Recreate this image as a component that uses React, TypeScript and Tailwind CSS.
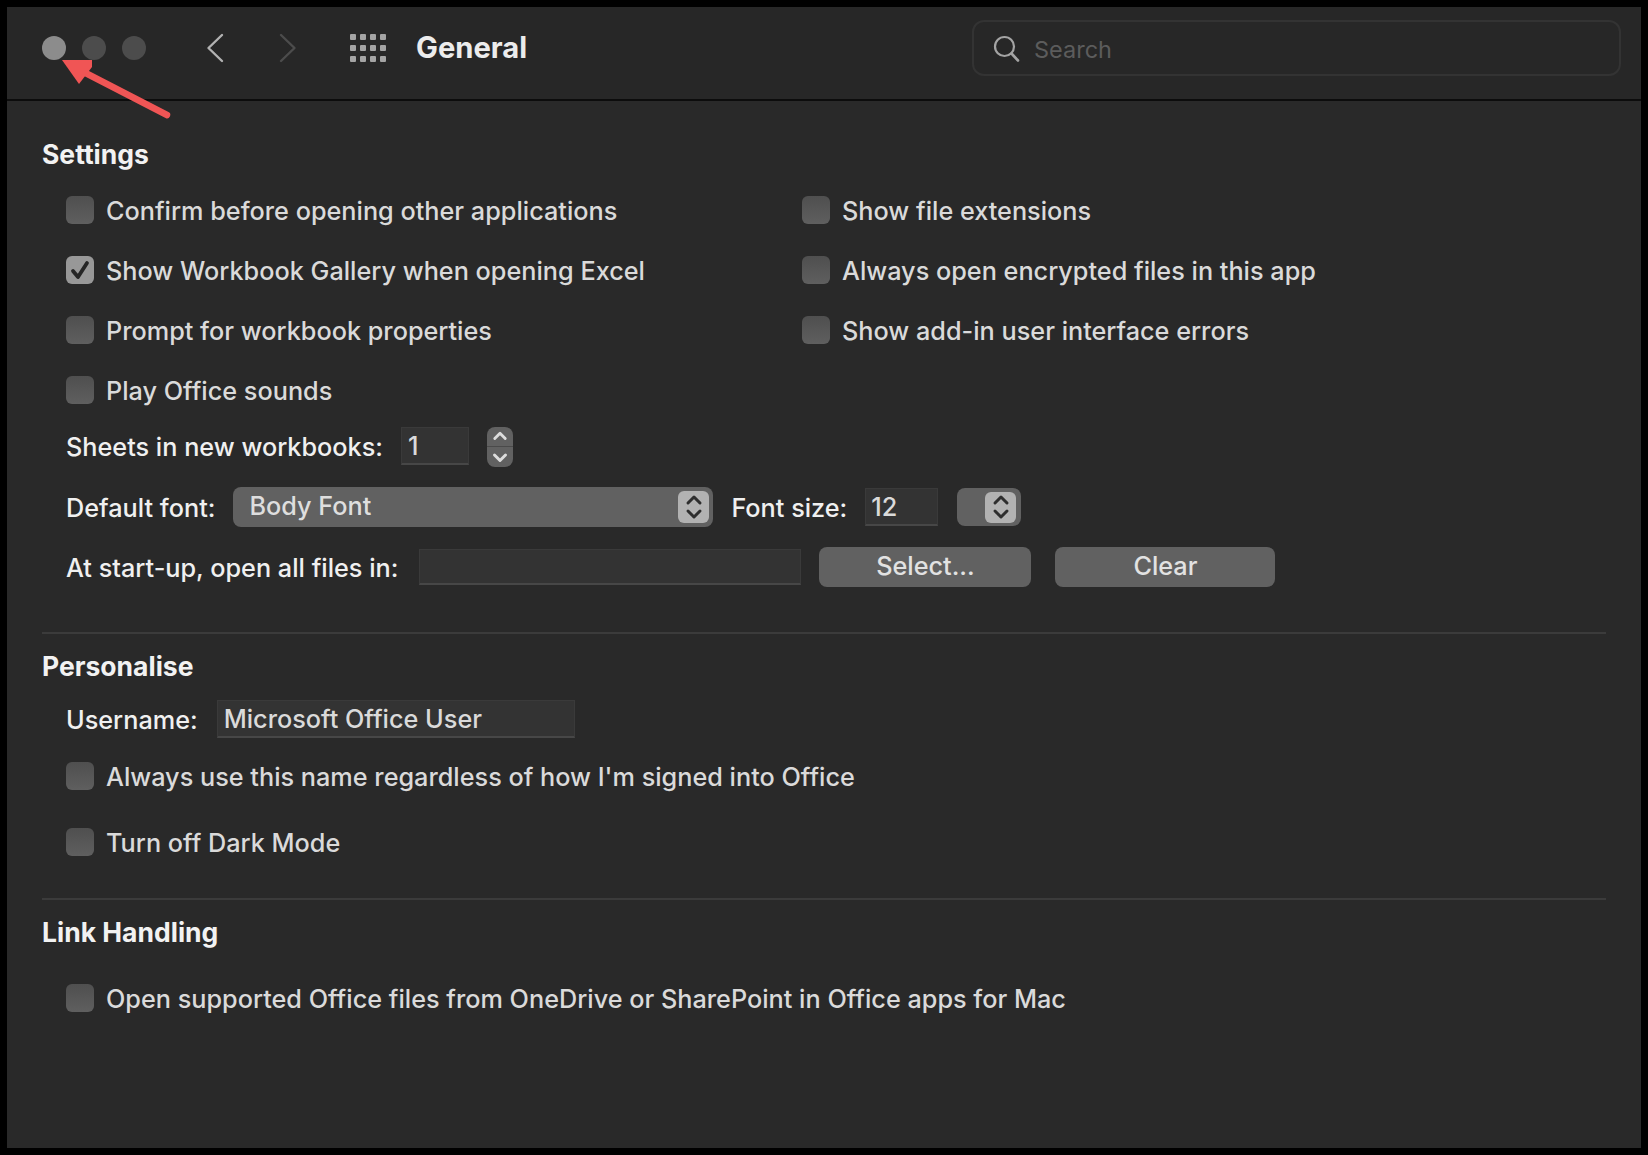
const F = "font-['Inter','Liberation_Sans',sans-serif]";

function Checkbox({ checked = false }: { checked?: boolean }) {
  if (checked) {
    return (
      <span className="flex h-[28px] w-[28px] shrink-0 items-center justify-center rounded-[6px] bg-[#989898]">
        <svg width="24" height="24" viewBox="0 0 24 24" fill="none">
          <path d="M5 13 L10 19 L19 5" stroke="#262626" strokeWidth="3.8" strokeLinecap="round" strokeLinejoin="round" />
        </svg>
      </span>
    );
  }
  return <span className="h-[28px] w-[28px] shrink-0 rounded-[6px] bg-gradient-to-b from-[#4f4f4f] to-[#5f5f5f]" />;
}

function CheckRow({ label, checked, h = "h-[60px]" }: { label: string; checked?: boolean; h?: string }) {
  return (
    <div className={`flex items-center gap-[12px] ${h}`}>
      <Checkbox checked={checked} />
      <span className="pt-[4px] text-[25.25px] font-[450] leading-none text-[#dadada] whitespace-nowrap">{label}</span>
    </div>
  );
}

function Heading({ children, className = "" }: { children: string; className?: string }) {
  return <div className={`flex h-[36px] items-center text-[26.5px] font-bold leading-none text-[#f2f2f2] ${className}`}>{children}</div>;
}

function Label({ children, className = "" }: { children: string; className?: string }) {
  return <span className={`pt-[4px] text-[25.25px] font-[450] leading-none text-[#f0f0f0] whitespace-nowrap ${className}`}>{children}</span>;
}

function Updown({ size = 20 }: { size?: number }) {
  return (
    <svg width={size} height={size * 1.4} viewBox="0 0 20 28" fill="none">
      <path d="M4 10 L10 4 L16 10" stroke="#2e2e2e" strokeWidth="3" strokeLinecap="round" strokeLinejoin="round" />
      <path d="M4 18 L10 24 L16 18" stroke="#2e2e2e" strokeWidth="3" strokeLinecap="round" strokeLinejoin="round" />
    </svg>
  );
}

function Field({ className = "", children }: { className?: string; children?: string }) {
  return (
    <div className={`flex items-center border border-[#3a3a3a] border-b-2 border-b-[#474747] bg-[#333333] pt-[2px] text-[25.25px] font-[450] leading-none text-[#dadada] ${className}`}>
      {children}
    </div>
  );
}

function Button({ children, className = "" }: { children: string; className?: string }) {
  return (
    <div className={`flex h-[40px] items-center justify-center rounded-[8px] bg-[#616161] text-[25.25px] font-[450] leading-none text-[#e2e2e2] ${className}`}>
      {children}
    </div>
  );
}

export default function App() {
  return (
    <div className={`relative h-[1155px] w-[1648px] overflow-hidden bg-black pl-[7px] pt-[7px] ${F}`}>
      <div className="flex h-[1141px] w-[1634px] flex-col bg-[#292929]">
        <header className="flex h-[94px] shrink-0 items-center border-b-2 border-b-[#0c0c0c] bg-[#272727] pb-[10px] pl-[35px] pr-[20px]">
          <span className="h-[24px] w-[24px] rounded-full bg-[#8c8c8c]" />
          <span className="ml-[16px] h-[24px] w-[24px] rounded-full bg-[#4c4c4c]" />
          <span className="ml-[16px] h-[24px] w-[24px] rounded-full bg-[#4c4c4c]" />
          <svg className="ml-[60px]" width="18" height="30" viewBox="0 0 18 30" fill="none">
            <path d="M16 2 L2.5 15 L16 28" stroke="#b2b2b2" strokeWidth="2.4" strokeLinecap="round" strokeLinejoin="round" />
          </svg>
          <svg className="ml-[55px]" width="18" height="30" viewBox="0 0 18 30" fill="none">
            <path d="M2 2 L15.5 15 L2 28" stroke="#4c4c4c" strokeWidth="2.4" strokeLinecap="round" strokeLinejoin="round" />
          </svg>
          <div className="ml-[53px] grid grid-cols-4 gap-x-[4px] gap-y-[5px]">
            {Array.from({ length: 12 }).map((_, i) => (
              <span key={i} className="h-[6px] w-[6px] rounded-[1px] bg-[#a4a4a4]" />
            ))}
          </div>
          <h1 className="ml-[30px] pb-[1px] text-[29.2px] font-bold leading-none text-[#ececec]">General</h1>
          <div className="ml-auto flex h-[56px] w-[649px] items-center rounded-[12px] border-2 border-[#333333] pl-[19px]">
            <svg width="27" height="27" viewBox="0 0 27 27" fill="none">
              <circle cx="11.5" cy="11.5" r="9.5" stroke="#a4a4a4" strokeWidth="2.2" />
              <path d="M18.5 18.5 L25 25.5" stroke="#a4a4a4" strokeWidth="2.6" strokeLinecap="round" />
            </svg>
            <span className="ml-[14px] pt-[4px] text-[23.5px] leading-none text-[#5c5c5c]">Search</span>
          </div>
        </header>

        <main className="flex-1 px-[35px] pt-[36px]">
          <Heading className="pb-[2px]">Settings</Heading>
          <div className="mt-[7px] grid grid-cols-[736px_1fr] pl-[24px]">
            <CheckRow label="Confirm before opening other applications" />
            <CheckRow label="Show file extensions" />
            <CheckRow label="Show Workbook Gallery when opening Excel" checked />
            <CheckRow label="Always open encrypted files in this app" />
            <CheckRow label="Prompt for workbook properties" />
            <CheckRow label="Show add-in user interface errors" />
            <CheckRow label="Play Office sounds" />
          </div>

          <div className="mt-[7px] flex h-[40px] items-center pl-[24px]">
            <Label className="mb-[2px]">Sheets in new workbooks:</Label>
            <Field className="ml-[18px] h-[38px] w-[68px] self-start pl-[6px]">1</Field>
            <div className="ml-[18px] flex h-[40px] w-[26px] flex-col items-center justify-between overflow-hidden rounded-[8px] bg-[#616161]">
              <svg className="border-b border-b-[#4a4a4a]" width="26" height="20" viewBox="0 0 26 20" fill="none">
                <path d="M7.5 12 L13 6.5 L18.5 12" stroke="#dcdcdc" strokeWidth="3" strokeLinecap="round" strokeLinejoin="round" />
              </svg>
              <svg width="26" height="20" viewBox="0 0 26 20" fill="none">
                <path d="M7.5 8 L13 13.5 L18.5 8" stroke="#dcdcdc" strokeWidth="3" strokeLinecap="round" strokeLinejoin="round" />
              </svg>
            </div>
          </div>

          <div className="mt-[20px] flex h-[40px] items-center pl-[24px]">
            <Label>Default font:</Label>
            <div className="ml-[18px] flex h-[40px] w-[480px] items-center justify-between rounded-[8px] bg-[#616161] pl-[16px] pr-[4px] text-[25.25px] font-[450] leading-none text-[#dedede]">
              <span>Body Font</span>
              <span className="flex h-[32px] w-[31px] items-center justify-center rounded-[6px] bg-[#b2b2b2]">
                <Updown size={20} />
              </span>
            </div>
            <Label className="ml-[18px]">Font size:</Label>
            <Field className="ml-[18px] h-[38px] w-[73px] pl-[5px]">12</Field>
            <div className="ml-[19px] flex h-[38px] w-[64px] items-center justify-end rounded-[8px] bg-[#616161] pr-[5px]">
              <span className="flex h-[31px] w-[31px] items-center justify-center rounded-[6px] bg-[#b2b2b2]">
                <Updown size={20} />
              </span>
            </div>
          </div>

          <div className="mt-[20px] flex h-[40px] items-center pl-[24px]">
            <Label>At start-up, open all files in:</Label>
            <Field className="ml-[21px] h-[36px] w-[382px]" />
            <Button className="ml-[18px] w-[212px]">Select...</Button>
            <Button className="ml-[24px] w-[220px]">Clear</Button>
          </div>

          <hr className="mt-[45px] h-[2px] w-[1564px] border-0 bg-[#3b3b3b]" />

          <Heading className="mt-[14px]">Personalise</Heading>
          <div className="mt-[16px] flex h-[38px] items-center pl-[24px]">
            <Label>Username:</Label>
            <Field className="ml-[19px] h-[38px] w-[358px] pl-[6px]">Microsoft Office User</Field>
          </div>
          <div className="mt-[5px] pl-[24px]">
            <CheckRow label="Always use this name regardless of how I'm signed into Office" h="h-[66px]" />
            <CheckRow label="Turn off Dark Mode" h="h-[66px]" />
          </div>

          <hr className="mt-[23px] h-[2px] w-[1564px] border-0 bg-[#3b3b3b]" />

          <Heading className="mt-[14px]">Link Handling</Heading>
          <div className="mt-[18px] pl-[24px]">
            <CheckRow label="Open supported Office files from OneDrive or SharePoint in Office apps for Mac" />
          </div>
        </main>
      </div>
      <svg className="absolute left-[55px] top-[52px]" width="120" height="70" viewBox="55 52 120 70" fill="none">
        <path d="M167 115 L72 66" stroke="#f05555" strokeWidth="6.5" strokeLinecap="round" />
        <path d="M62 60 L92 60 L92 67 L79 84 Z" fill="#f05555" />
      </svg>
    </div>
  );
}
